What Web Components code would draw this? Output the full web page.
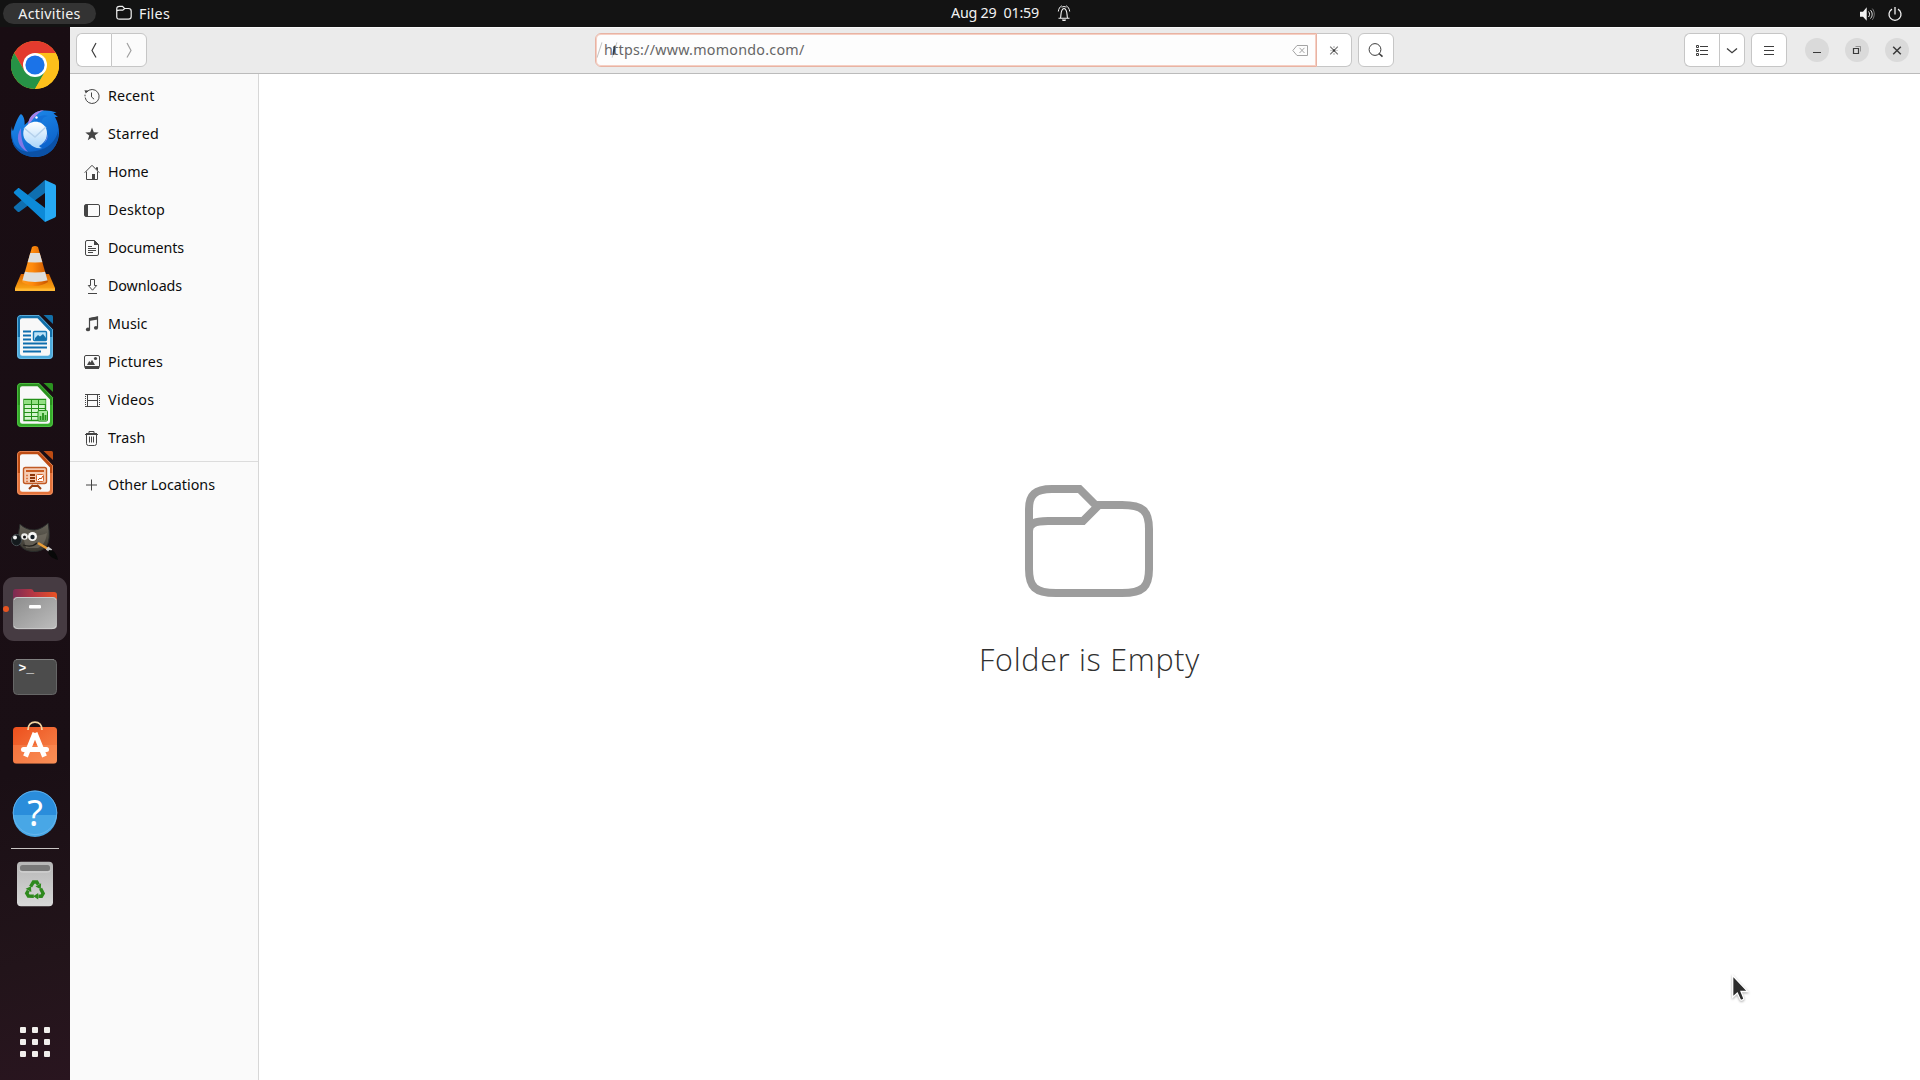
<!DOCTYPE html>
<html lang="en">
<head>
<meta charset="utf-8">
<title>Files</title>
<style>
html,body{margin:0;height:100%;overflow:hidden;background:#fff}
body{font-family:"Noto Sans","Open Sans",sans-serif;font-size:14.3px}
</style>
</head>
<body>
<desk-shell></desk-shell>
<script>
const define=(name,css,html,after)=>{
  const t=document.createElement('template');
  t.innerHTML=`<style>:host{box-sizing:border-box}*{box-sizing:border-box}svg{display:block;flex:none}${css}</style>${html}`;
  customElements.define(name,class extends HTMLElement{
    constructor(){super();this.attachShadow({mode:'open'}).appendChild(t.content.cloneNode(true));}
    connectedCallback(){if(after)after.call(this,this.shadowRoot);}
  });
};

/* Text spread to a given advance width by letter spacing */
define('fit-text',':host{display:block;white-space:pre;flex:none}:host([up]){padding-bottom:2px}span{display:inline-block;white-space:pre}','<span></span>',function(r){
  const s=r.querySelector('span');
  s.textContent=this.getAttribute('text');
  const w=parseFloat(this.getAttribute('w'));
  const n=s.textContent.length;
  s.style.letterSpacing=((w-s.getBoundingClientRect().width)/n)+'px';
  this.style.width=w+'px';
});

/* 16px line icons */
const glyphs={
recent:'<path d="M2.6 4.2A7 7 0 1 1 1.2 9.5"/><path d="M1 8.3v-1.6"/><path d="M.4 2.2l4 .2-2.6 3.2z" fill="currentColor" stroke="none"/><path d="M7.5 4.5v4.4l2.6 2.3"/>',
star:'<path d="M8 1.6l1.8 4.6 4.9.2-3.9 3 1.4 4.8L8 11.4l-4.2 2.8 1.4-4.8-3.9-3 4.9-.2z" fill="currentColor" stroke="none"/>',
home:'<path d="M.7 8.7L8 1.3l7.3 7.4M2.5 7.6v7.9h11V7.6M12.5 5.3V3.5h1v3"/><path d="M8 10h3v5.5H8z" fill="currentColor" stroke="none"/>',
desktop:'<rect x=".5" y="2.5" width="15" height="12" rx="1.5"/><path d="M1 3h3v11H1z" fill="currentColor" stroke="none"/>',
doc:'<path d="M3 .5h7.5l4 4V14a1.5 1.5 0 0 1-1.5 1.5H3A1.5 1.5 0 0 1 1.5 14V2A1.5 1.5 0 0 1 3 .5z"/><path d="M10 0l5 5h-5z" fill="currentColor" stroke="none"/><path d="M4 6.5h4M4 8.5h8M4 10.5h8M4 12.5h5"/>',
down:'<path d="M6.5 1.5h4v6h2.2L8.5 12.2 4.3 7.500h2.2zM4 15.500h9"/>',
music:'<path d="M5.500 13V2.500L13.500 1v10.500" stroke-width="1.200"/><path d="M5 2.200L14 .5v3L5 5z" fill="currentColor" stroke="none"/><ellipse cx="4" cy="13.400" rx="2.100" ry="1.900" fill="currentColor" stroke="none"/><ellipse cx="12" cy="11.800" rx="2.100" ry="1.900" fill="currentColor" stroke="none"/>',
pic:'<rect x=".5" y="1.500" width="15" height="12.500" rx="1.500"/><path d="M1 12h14v3H1zM3 11l2.200-4 1.300 1.500L8 5.700 11 11z" fill="currentColor" stroke="none"/><circle cx="11.500" cy="4.500" r="1.600" fill="currentColor" stroke="none"/>',
video:'<path d="M3.500 2v13M13.500 2v13M3.500 2.500h10M3.500 8.500h10M3.500 14.500h10"/><path d="M1.500 2v13M15.500 2v13" stroke-dasharray="1 1"/><path d="M2 2.500h1M14 2.500h1M2 14.500h1M14 14.500h1"/>',
trash:'<path d="M1 4.500h13M5 3.500V1.500h5v2M2.500 5v8.500a2 2 0 0 0 2 2h6a2 2 0 0 0 2-2V5M5.500 6.500v6M7.500 6.500v6M9.500 6.500v6"/><path d="M2 3h11v1H2z" fill="currentColor" stroke="none"/>',
plus:'<path d="M7.500 2.500v11M2 8h11"/>',
back:'<path d="M10 1L6 8.500l4 7" stroke-width="1.200"/>',
fwd:'<path d="M6 1l4 7.500-4 7" stroke-width="1.200"/>',
clear:'<path d="M.8 8.500L5 3.500h10.500v10H5z"/><path d="M7.500 5.800l5 5.200M12.500 5.800l-5 5.200"/>',
wait:'<path d="M4.200 4.700L11.800 12.300M11.800 4.700L4.200 12.300" stroke-width="1.100" opacity=".75"/><path d="M8 4v2M8 11v2" opacity=".45"/><path d="M4 8.500h2.500M9.500 8.500H12" opacity=".25"/><circle cx="8" cy="8.500" r="1.200" fill="currentColor" stroke="none"/>',
search:'<circle cx="7" cy="7.500" r="5.900"/><path d="M11 11.500l3.500 3.200" stroke-width="1.600"/>',
list:'<path d="M2.500 3.500h2v2h-2zM2.500 7.500h2v2h-2zM2.500 11.500h2v2h-2zM6 4.500h8M6 8.500h8M6 12.500h8"/>',
chev:'<path d="M3 6.500l5 4.200 5-4.200" stroke-width="1.300"/>',
menu:'<path d="M3 4.500h10M3 8.500h10M3 12.500h10"/>',
min:'<path d="M4 10.500h8"/>',
max:'<path d="M4.500 6.500h5v5h-5z" stroke-width="1.200"/><path d="M6.500 4.500h5v5" opacity=".45"/>',
close:'<path d="M4.200 4.700l7.600 7.600M11.800 4.700l-7.600 7.600" stroke-width="1.500"/>',
folder:'<path d="M.75 5V4C.75 2.200 1.500 1.400 3.500 1.400h3l2 2.100h4c2 0 2.700.8 2.700 2.700v5.300c0 2-.7 2.700-2.700 2.700h-9c-2 0-2.750-.7-2.750-2.700zM.8 6c.4-.7 1.200-.8 2.700-.8h3.300l1.900-1.600" stroke-width="1.200"/>',
bell:'<path d="M4.500 12.800C5.300 11 4.200 4 8 3.500 11.800 4 10.700 11 11.500 12.800M2.500 13.300h11" stroke-width="1.100"/><path d="M2.300 6.500C2.500 4 4 1.500 5.800.8M13.700 6.500C13.500 4 12 1.500 10.200.8M5.700 2.300C7 1.300 9 1.300 10.300 2.300" stroke-width="1"/><path d="M6 14.600h4a2 1.700 0 0 1-4 0z" fill="currentColor" stroke="none"/>',
sound:'<path d="M1 5.700h3L7.700 1.200v13.600L4 10.700H1z" fill="currentColor" stroke="none"/><path d="M9.500 5.500c1.400 1.500 1.400 4 0 5.500"/><path d="M11.500 4.200c2.200 2.300 2.200 6 0 8.300" /><path d="M13.300 2.600c2.600 3 2.600 8 0 11.200" opacity=".45"/>',
power:'<path d="M5 3.100a6 6 0 1 0 6 0M8 1v7.500" stroke-width="1.300"/>'
};
define('line-icon',':host{display:block;width:16px;height:16px;flex:none}','<svg width="16" height="16" viewBox="0 0 16 16" fill="none" stroke="currentColor"></svg>',function(r){
  r.querySelector('svg').innerHTML=glyphs[this.getAttribute('name')];
});

/* Top panel */
define('top-panel',`:host{display:grid;grid-template-columns:1fr auto 1fr;align-items:center;height:27px;background:#131313;color:#f2f2f2;flex:none}
.l,.c,.r{display:flex;align-items:center;height:27px}
.pill{display:flex;align-items:center;justify-content:center;width:93px;height:21px;margin-left:3px;border-radius:11px;background:#333}
.l line-icon{margin:0 7px 2px 20px}.c{gap:17px;padding-left:103px;padding-bottom:1px}.r{justify-content:flex-end;gap:12px;padding-right:17px}`,
`<div class="l"><div class="pill"><fit-text w="62.500" text="Activities"></fit-text></div><line-icon name="folder"></line-icon><fit-text w="31" text="Files"></fit-text></div>
<div class="c"><fit-text up w="88" text="Aug 29  01:59"></fit-text><line-icon name="bell"></line-icon></div>
<div class="r"><line-icon name="sound"></line-icon><line-icon name="power"></line-icon></div>`);

/* Dock drawings on a 48px grid */
const sheet=(a,b,c,inner)=>`<defs><linearGradient id="g" x2="0" y2="1"><stop offset="0" stop-color="${a}"/><stop offset=".5" stop-color="${a}"/><stop offset=".5" stop-color="${b}"/><stop offset="1" stop-color="${b}"/></linearGradient></defs>
<path d="M10 2h18l14 14.500V42a4 4 0 0 1-4 4H10a4 4 0 0 1-4-4V6a4 4 0 0 1 4-4z" fill="url(#g)"/><path d="M10.500 2.500h17.500l13.500 14V42a3.500 3.500 0 0 1-3.500 3.500H10A3.500 3.500 0 0 1 6.500 42V6a3.500 3.500 0 0 1 4-3.500z" fill="none" stroke="${c}" opacity=".7"/><path d="M11.500 5.200H26.500L39 18.500v22a2.300 2.300 0 0 1-2.300 2.300H11.300A2.300 2.300 0 0 1 9 40.500v-33a2.300 2.300 0 0 1 2.500-2.300z" fill="#f8f8f8"/><path d="M32.500 2h8A1.500 1.500 0 0 1 42 3.500V11z" fill="${a}"/>${inner}`;
const recycle='<path d="M19.600 26.600L22.400 22h3.400l1.500 2.700" fill="none" stroke="#2e891d" stroke-width="3.400"/><path d="M24.500 26.500l5.600-3.300-.3 6z"/>';
const apps={
chrome:'<circle cx="24" cy="24" r="24" fill="#fbc116"/><path d="M24 12h20.800A24 24 0 0 0 3.200 12l10.400 18z" fill="#e33b2e"/><path d="M3.200 12A24 24 0 0 0 24 48l10.400-18L24 24 13.600 30z" fill="#269346"/><path d="M34.400 30L24 48A24 24 0 0 0 44.800 12H24z" fill="#fdc01b"/><circle cx="24" cy="24" r="12" fill="#fff"/><circle cx="24" cy="24" r="9.600" fill="#1b73e8"/>',
bird:'<defs><linearGradient id="b" x2=".5" y2="1"><stop stop-color="#208fee"/><stop offset="1" stop-color="#0b60c9"/></linearGradient><linearGradient id="m" x2="0" y2="1"><stop stop-color="#fff"/><stop offset="1" stop-color="#a9d5fa"/></linearGradient></defs><path d="M1 17c0 4 1 5 1 5 2-6 5-15 8-17 3 2 4 7 3.500 11L18 12C20 5 26 1 34 1.500c5 0 7.500 1 11.500 1.700l-3 1.300 4.500 3.500-3 0c3 5 4 11 4 16.500C47 38 38 48 24 48S-1 37 .2 22z" fill="url(#b)"/><path d="M1 25c0 15 12 20 24 17 12-2 20-10 22-20 2 14-8 26-23 26S-1 37 1 25z" fill="#0b51a6"/><path d="M10 19c-6 9-3 20 7 24-5-6-7-12-7-24z" fill="#8077e6"/><path d="M17 15C18 7 24 2 33 1c-7 3-8 6-15 14z" fill="#a783e9"/><path d="M23 12c4-5 9-7 14-5-5 1-6 3-6 6z" fill="#1371d8"/><path d="M13 20c5-9 17-10 22-1 3 8-1 15-7 18 1 1 2 2 3 2-5 1-9-1-12-4-6-3-8-9-6-15z" fill="url(#m)"/><path d="M13 19l11 9 11-10" fill="none" stroke="#b5d1ec" stroke-width="1.500"/><path d="M36 25c2 5-2 10-8 11 5-1 8-4 8-11z" fill="#8991eb"/><circle cx="25.500" cy="8.500" r="1.200" fill="#fff"/>',
code:'<path d="M34 3v13L8.500 34.700c-.7.500-1.300.400-1.800 0L3.300 31.500c-.7-.7-.6-1.400 0-2z" fill="#0f6fb0"/><path d="M3.300 16.500c-.6-.6-.6-1.300 0-1.900L6.700 11.400c.5-.5 1.200-.5 1.800 0L34 31v14z" fill="#0d8ad8"/><path d="M34 3l10 4.600c.7.400 1 .9 1 1.600v29.600c0 .7-.3 1.200-1 1.600L34 45z" fill="#26a9f4"/>',
cone:'<defs><linearGradient id="o" x2="1" y2="0"><stop stop-color="#ff9a1f"/><stop offset=".4" stop-color="#ff8a0c"/><stop offset="1" stop-color="#c75400"/></linearGradient><linearGradient id="p" x2="0" y2="1"><stop stop-color="#d96400"/><stop offset="1" stop-color="#ffad18"/></linearGradient><clipPath id="k"><path d="M21 2q3-2 6 0l10 35q-13 8-26 0z"/></clipPath></defs><path d="M10 29h28l6 14v2a1 1 0 0 1-1 1H5a1 1 0 0 1-1-1v-2z" fill="url(#p)"/><path d="M4 43.500h40V46H4z" fill="#ffb834"/><path d="M21 2q3-2 6 0l10 35q-13 8-26 0z" fill="url(#o)"/><path d="M8 8h32v8.500q-16 2-32 0zM8 25.500q16 4 32 0v9q-16 5-32 0z" fill="#dededc" clip-path="url(#k)"/>',
writer:sheet('#1370a9','#4daadb','#79c2e9','<path d="M12 18.500h8M12 22.500h8M12 26.500h8M12 30.500h24M12 34.500h24M12 38.500h18" stroke="#0f6eae" stroke-width="2"/><rect x="22.500" y="18.500" width="13" height="9" rx="1" fill="#bde3f8" stroke="#1479b7" stroke-width="1.400"/><path d="M24 27v-2l3-3 2 1.500 3-2.500 3 4v2z" fill="#1370a9"/>'),
calc:sheet('#2b9320','#36ac2b','#57cb4b','<path d="M13 18.500h21.500v21H13z" fill="#d3f5cd" stroke="#239018" stroke-width="1.400"/><path d="M13 19h21.500v4H13z" fill="#92e083"/><path d="M13 23.500h21.500M13 27.500h21.500M13 31.500h21.500M13 35.500h21.500M20.500 18.500v21M27.500 18.500v21" stroke="#239018"/><rect x="27" y="29.500" width="9.500" height="10.500" rx="1" fill="#a8e99c" stroke="#239018"/><path d="M29.500 39v-4M32 39v-7M34.500 39v-5" stroke="#239018" stroke-width="1.800"/>'),
impress:sheet('#bd4c13','#e4743c','#f19a6d','<rect x="12.500" y="18.500" width="23" height="16" rx="2" fill="#f5cdb4" stroke="#c05a24" stroke-width="1.400"/><path d="M15 22h18" stroke="#c85a20" stroke-width="2"/><path d="M15 26.500h2M15 29.500h2M15 32.500h2" stroke="#df7b49" stroke-width="1.600"/><path d="M19 26h5M19 29h5M19 32h5" stroke="#8d370c" stroke-width="2"/><rect x="25.500" y="25.500" width="7" height="7" rx="1" fill="#fff" stroke="#d7672e"/><path d="M27 31l2-2 1 1 2-3" fill="none" stroke="#c34f15"/><path d="M22 36l-4 4M26 36l4 4M22 37h4" stroke="#983e10" stroke-width="2"/>'),
gimp:'<defs><linearGradient id="f" x2="0" y2="1"><stop stop-color="#67645a"/><stop offset="1" stop-color="#39362f"/></linearGradient></defs><path d="M9 7c4 4 9 6 15 6 6-1 10-4 13-7 2 10 2 21-3 25-8 6-21 4-25-3-3-5-1-14 0-21z" fill="url(#f)" stroke="#292c2b"/><path d="M11 16c4 3 17 4 25 0-1 8-4 13-9 15H15z" fill="#827c70" opacity=".5"/><ellipse cx="5.500" cy="23" rx="5" ry="5.700" fill="#141a1d" stroke="#454c50"/><circle cx="4" cy="20.500" r="2" fill="#f4f4f4"/><circle cx="13.500" cy="19.500" r="3.300" fill="#ededeb"/><circle cx="13.500" cy="20" r="1.500" fill="#111"/><circle cx="21.500" cy="19.500" r="4.500" fill="#f8f8f6"/><circle cx="21.500" cy="20" r="2.200" fill="#182128"/><path d="M12 28c6 2 11 1 14-2" fill="none" stroke="#211f1b" stroke-width="1.200"/><path d="M27 26l10 6" stroke="#ea9d37" stroke-width="2.600"/><path d="M36 31l4 3" stroke="#c6c6c6" stroke-width="4"/><path d="M38 33c6 0 8 5 9 10-6-2-9-4-10-8z" fill="#080808"/>',
files:'<defs><linearGradient id="t" x2="1" y2="0"><stop stop-color="#7b2b53"/><stop offset=".5" stop-color="#bb3842"/><stop offset="1" stop-color="#ea5424"/></linearGradient><linearGradient id="s" x2="1" y2="1"><stop stop-color="#8d8d8d"/><stop offset="1" stop-color="#bdbdbd"/></linearGradient></defs><path d="M4 4h16q2 0 3 3h20a3 3 0 0 1 3 3v12H2V7a3 3 0 0 1 2-3z" fill="url(#t)"/><rect x="2" y="12" width="44" height="32" rx="4" fill="url(#s)"/><path d="M3 15q1-2.500 3-2.500h36q2 0 3 2.500" fill="none" stroke="#c8c8c8"/><path d="M3 41q1 2.700 4 2.700h34q3 0 4-2.700" fill="none" stroke="#dadada" stroke-width=".7"/><rect x="18" y="20" width="12" height="3.400" rx="1.200" fill="#fff"/>',
term:'<rect x="2.500" y="6.500" width="43" height="35" rx="4" fill="#4c4c4c" stroke="#666"/><path d="M5 6.500h38" stroke="#818181"/><text x="7.500" y="19" font-family="Liberation Mono,monospace" font-weight="bold" font-size="13" fill="#fff">&gt;_</text>',
store:'<defs><linearGradient id="q" x2="1" y2="1"><stop stop-color="#ed4f1c"/><stop offset="1" stop-color="#f68a50"/></linearGradient></defs><rect x="2" y="6" width="44" height="36.500" rx="3.500" fill="url(#q)"/><path d="M2 24h44v15a3.500 3.500 0 0 1-3.500 3.500h-37A3.500 3.500 0 0 1 2 39z" fill="#ff9b65" opacity=".35"/><path d="M17 9C17 4 20 1.200 24 1.200S31 4 31 9" fill="none" stroke="#f4d5a2" stroke-width="1.800"/><path d="M24 12L14.500 35.500M24 12l9.500 23.500" stroke="#fff" stroke-width="5"/><path d="M12.500 28.500h23" stroke="#fff" stroke-width="5" stroke-linecap="round"/>',
help:'<circle cx="24" cy="23.800" r="22.200" fill="#2a8ddb"/><path d="M2 26a22 22 0 0 0 44 0z" fill="#48a7e6"/><circle cx="24" cy="23.800" r="21.800" fill="none" stroke="#6fb9ee" stroke-width=".8"/><text x="24" y="36.500" text-anchor="middle" font-family="Noto Sans,sans-serif" font-size="36" fill="#fff">?</text>',
bin:'<defs><linearGradient id="r" x2="0" y2="1"><stop stop-color="#b6b6b6"/><stop offset="1" stop-color="#d8d8d8"/></linearGradient></defs><rect x="6" y="1.700" width="36" height="44.600" rx="4" fill="url(#r)"/><rect x="9" y="5" width="30" height="6" rx="2.500" fill="#797979"/><path d="M8.500 10.500q.5 1.500 3 1.500h25q2.500 0 3-1.500" fill="none" stroke="#dedede" stroke-width=".8"/><g fill="#2e891d">'+[0,120,240].map(a=>`<g transform="rotate(${a} 24 30.500)">${recycle}</g>`).join('')+'</g>'
};
define('app-icon',`:host{display:flex;align-items:center;justify-content:center;width:64px;height:64px;border-radius:11px;margin:0 3px 4px;position:relative;flex:none}
:host([active]){background:#463b42}i{display:none}:host([active]) i{display:block;position:absolute;left:0;top:29px;width:6px;height:6px;border-radius:50%;background:#e95420}`,
'<i></i><svg width="48" height="48" viewBox="0 0 48 48"></svg>',function(r){r.querySelector('svg').innerHTML=apps[this.getAttribute('name')];});
define('app-grid',':host{display:grid;grid-template-columns:repeat(3,6px);gap:6px;margin:auto 20px 23px}i{height:6px;border-radius:1px;background:#f1efec}','<i></i>'.repeat(9));
define('app-dock',`:host{display:flex;flex-direction:column;width:70px;flex:none;padding-top:6px;background:linear-gradient(165deg,#190d13 0%,#1a0f15 70%,#22141a 88%,#29151f 100%)}
hr{border:0;margin:-1px 11px 3px;height:1px;background:#c9c5c4;flex:none}`,
['chrome','bird','code','cone','writer','calc','impress','gimp','files','term','store','help'].map(n=>`<app-icon name="${n}"${n==='files'?' active':''}></app-icon>`).join('')+'<hr><app-icon name="bin"></app-icon><app-grid></app-grid>');

/* Header bar */
define('tool-button',`:host{display:flex;align-items:center;justify-content:center;height:34px;width:36px;background:#fff;border:1px solid #c6c6c6;border-radius:6px;color:#3d3d3d;flex:none}
:host([first]){border-radius:6px 0 0 6px;border-right:0;width:35px}:host([last]){border-radius:0 6px 6px 0}:host([dim]){color:#a0a0a0;background:#fbfbfb}:host([narrow]){width:26px}`,'<slot></slot>');
define('window-button',':host{display:flex;align-items:center;justify-content:center;width:24px;height:24px;border-radius:50%;background:#dadada;color:#3a3a3a;flex:none}','<slot></slot>');
define('path-entry',`:host{display:flex;align-items:center;width:722px;height:34px;border:1px solid #e8b3a3;box-shadow:inset 0 0 0 1px #f6cfc3;border-radius:6px 0 0 6px;background:#fdfdfd;color:#666;padding:0 8px;position:relative;flex:none}
line-icon{margin-left:auto;color:#a4a4a4}
i{position:absolute;width:1px;height:16px;top:8px;transform:rotate(18deg);background:#c4c4c4}.b{left:17px;width:2px;height:9px;top:12px;transform:rotate(8deg);background:#333c48}.a{left:3px}.c{left:18px}`,
'<i class="a"></i><i class="c"></i><fit-text up w="200.500" text="https://www.momondo.com/"></fit-text><i class="b"></i><line-icon name="clear"></line-icon>');
define('header-bar',`:host{display:grid;grid-template-columns:519px 1fr auto;align-items:center;height:47px;padding:0 11px 1px 6px;background:#ebebeb;border-top:1px solid #f8f8f8;border-bottom:1px solid #bbb;flex:none}
div{display:flex;align-items:center}.g{margin-left:6px}.w{gap:16px;margin-left:18px}`,
`<div><tool-button first><line-icon name="back"></line-icon></tool-button><tool-button last dim><line-icon name="fwd"></line-icon></tool-button></div>
<div><path-entry></path-entry><tool-button last style="border-left:0;width:35px"><line-icon name="wait"></line-icon></tool-button><tool-button class="g"><line-icon name="search"></line-icon></tool-button></div>
<div><tool-button first><line-icon name="list"></line-icon></tool-button><tool-button last narrow><line-icon name="chev"></line-icon></tool-button><tool-button class="g"><line-icon name="menu"></line-icon></tool-button>
<div class="w"><window-button><line-icon name="min"></line-icon></window-button><window-button><line-icon name="max"></line-icon></window-button><window-button><line-icon name="close"></line-icon></window-button></div></div>`);

/* Sidebar */
const places=[['recent','Recent',46.5],['star','Starred',51],['home','Home',40.5],['desktop','Desktop',57],['doc','Documents',76],['down','Downloads',74],['music','Music',39.5],['pic','Pictures',55],['video','Videos',46.5],['trash','Trash',37.5],['plus','Other Locations',107]];
define('place-item',':host{display:flex;align-items:center;gap:8px;height:38px;padding-left:14px;color:#0c0c0c;flex:none}line-icon{color:#454545}','',function(r){
  const p=places[+this.getAttribute('index')];
  r.innerHTML+=`<line-icon name="${p[0]}"></line-icon><fit-text up w="${p[2]}" text="${p[1]}"></fit-text>`;
});
define('places-bar',':host{display:flex;flex-direction:column;width:189px;padding-top:3px;background:#fafafa;border-right:1px solid #d7d7d7;flex:none}hr{border:0;margin:4px 0;height:1px;background:#dcdcdc;flex:none}',
places.map((p,i)=>(i===10?'<hr>':'')+`<place-item index="${i}"></place-item>`).join(''));

/* Empty folder view */
define('empty-view',`:host{flex:1;display:flex;flex-direction:column;align-items:center;padding-top:403px;background:#fff}
svg{margin-right:2px}fit-text{font:300 30.500px/42px "Open Sans","Noto Sans",sans-serif;color:#303030;margin-top:33px}`,
`<svg width="128" height="128" viewBox="0 0 128 128" fill="none" stroke="#9d9d9d" stroke-width="8"><path d="M4 56V32C4 18 10 12 27 12H54.500L70.500 28H97C118 28 124 34 124 52V92C124 110 118 116 97 116H31C10 116 4 110 4 92V54C4 47 9 44 23 44H58L73 29"/></svg>
<fit-text w="221" text="Folder is Empty"></fit-text>`);

define('mouse-pointer',':host{position:absolute;left:1730px;top:973px}svg{filter:drop-shadow(0 1px 1px #0005)}','<svg width="24" height="32" viewBox="0 0 24 32"><path d="M2.700 2.500v21.700l4.600-4.200 2.900 6.500c.7 1.500 4.200.2 3.500-1.500L11 18.500h6.800z" fill="#2c2c2c" stroke="#fff" stroke-width="1.300"/></svg>');

define('file-window',':host{display:flex;flex-direction:column;flex:1;min-width:0}.m{display:flex;flex:1;min-height:0}','<header-bar></header-bar><div class="m"><places-bar></places-bar><empty-view></empty-view></div>');
define('desk-shell',':host{display:flex;flex-direction:column;width:1920px;height:1080px;position:relative;overflow:hidden}.m{display:flex;flex:1;min-height:0}','<top-panel></top-panel><div class="m"><app-dock></app-dock><file-window></file-window></div><mouse-pointer></mouse-pointer>');
</script>
</body>
</html>
